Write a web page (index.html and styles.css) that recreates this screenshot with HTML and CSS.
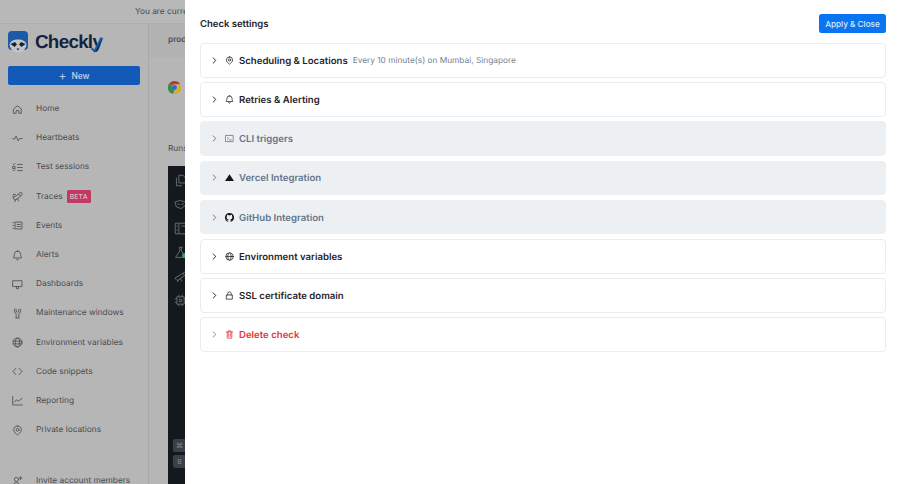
FILE: index.html
```html
<!DOCTYPE html>
<html lang="en">
<head>
<meta charset="utf-8">
<title>Check settings</title>
<link rel="stylesheet" href="styles.css">
</head>
<body>
<div class="app">
  <div class="banner">You are currently viewing</div>
  <div class="shell">
    <aside class="sidebar">
      <div class="logo">
        <svg class="logo-mark" viewBox="0 0 20 22" width="20" height="22">
          <rect x="0" y="0" width="20" height="19" rx="4" fill="#1a5ba8"/>
          <path d="M1.500 14c.5-4 4-5.500 8.500-5.500s8 1.500 8.500 5.500c-1 4.500-4 7.500-8.500 7.500s-7.500-3-8.500-7.500z" fill="#c4c4c4"/>
          <path d="M2.500 13l4.500-2 2 2.500-2.500 2.500zM17.500 13 13 11l-2 2.500 2.500 2.500z" fill="#17233c"/>
          <path d="M8.500 17.500h3l-1.500 2z" fill="#17233c"/>
        </svg>
        <span class="logo-text">Checkly<svg class="logo-check" viewBox="0 0 14 18" width="13" height="17"><path d="M1.500 13 5 16 12.500 1.500" /></svg></span>
      </div>
      <button class="new-btn"><span class="plus">+</span>New</button>
      <nav class="nav">
        <a class="nav-item"><svg class="ico" viewBox="0 0 16 16"><path d="M2.500 7 8 2.500 13.500 7v6.500h-3.500v-4H6v4H2.500z"/></svg>Home</a>
        <a class="nav-item"><svg class="ico" viewBox="0 0 16 16"><path d="M1 8.500h3l2-4 3 7 2-3.500h4"/></svg>Heartbeats</a>
        <a class="nav-item"><svg class="ico" viewBox="0 0 16 16"><path d="M8 3.500h7M8 8h7M8 12.500h7M1.500 3l1 1 2-2M1.500 6.500h3v3h-3zM1.500 12l1 1 2-2"/></svg>Test sessions</a>
        <a class="nav-item"><svg class="ico" viewBox="0 0 16 16"><path d="M2 9.500l8-5 2.500 3.500-8 5zM10 3.500l3-2 2 3.500-2.500 2M6 12.500l-2 3M8 11.500l2 3M2 5h3M1 7.500h2"/></svg>Traces<span class="badge">BETA</span></a>
        <a class="nav-item"><svg class="ico" viewBox="0 0 16 16"><path d="M5 3h9.500v10H5zM7.500 6.500h4.500M7.500 9.500h4.500M1.500 3.500h1M1.500 8h1M1.500 12.500h1"/></svg>Events</a>
        <a class="nav-item"><svg class="ico" viewBox="0 0 16 16"><path d="M8 1.500a4.500 4.500 0 0 1 4.500 4.500c0 3.500 1.500 5 1.500 5.500H2c0-.5 1.500-2 1.500-5.500A4.500 4.500 0 0 1 8 1.500zM6.500 13.500a1.600 1.600 0 0 0 3 0"/></svg>Alerts</a>
        <a class="nav-item"><svg class="ico" viewBox="0 0 16 16"><path d="M1.500 2.500h13v8.500h-13zM6.500 11v3h3v-3"/></svg>Dashboards</a>
        <a class="nav-item"><svg class="ico" viewBox="0 0 16 16"><path d="M4 1.500c-1.500 3 0 6 2 6.500v6.500M12 1.500c1.500 3 0 6-2 6.500v6.500M6 14.500h4M6 2v3l2 1 2-1V2"/></svg>Maintenance windows</a>
        <a class="nav-item"><svg class="ico" viewBox="0 0 16 16"><circle cx="8" cy="8" r="6.500"/><ellipse cx="8" cy="8" rx="3" ry="6.500"/><path d="M1.500 6h13M1.500 10h13"/></svg>Environment variables</a>
        <a class="nav-item"><svg class="ico" viewBox="0 0 16 16"><path d="M5.500 3.500 1.500 8l4 4.500M10.500 3.500l4 4.500-4 4.500"/></svg>Code snippets</a>
        <a class="nav-item"><svg class="ico" viewBox="0 0 16 16"><path d="M1 2v12.500h14M3.500 10.500l3-3.500 3 2 5-4"/></svg>Reporting</a>
        <a class="nav-item"><svg class="ico" viewBox="0 0 16 16"><path d="M8 1.500a5.500 5.500 0 0 1 5.500 5.500c0 3.500-3.500 6-5.500 7.500C6 13 2.500 10.500 2.500 7A5.500 5.500 0 0 1 8 1.500z"/><circle cx="8" cy="7" r="2"/></svg>Private locations</a>
      </nav>
      <a class="nav-item invite"><svg class="ico" viewBox="0 0 16 16"><circle cx="6.500" cy="5" r="3"/><path d="M1.500 14.500c0-3 2-5 5-5s5 2 5 5M12.500 1v4M10.500 3h4"/></svg>Invite account members</a>
    </aside>
    <main class="main">
      <div class="main-head"><span class="crumb">prod</span></div>
      <div class="check-row">
        <svg class="chrome" viewBox="0 0 16 16" width="13" height="13">
          <path d="M8 0a8 8 0 0 1 7 4H8a4 4 0 0 0-3.500 2L2 2.500A8 8 0 0 1 8 0z" fill="#b53a32"/>
          <path d="M2 2.500 4.500 6 8 12l-2 3.800A8 8 0 0 1 2 2.500z" fill="#3b8a4e"/>
          <path d="M15 4a8 8 0 0 1-9 11.800L11.500 10A4 4 0 0 0 11 4z" fill="#d6a92e"/>
          <circle cx="8" cy="8" r="3" fill="#2c6fb5"/>
        </svg>
      </div>
      <div class="runs-label">Runs</div>
      <div class="terminal">
        <div class="term-rail">
          <svg class="term-ico" viewBox="0 0 16 16"><path d="M6 1.500h5l3 3V11H6zM3 4.500v10h7"/></svg>
          <svg class="term-ico" viewBox="0 0 16 16"><path d="M1 5l6-2 8 2-1 4-5 4-6-2zM4 7l3 1M9 8l3-1"/></svg>
          <svg class="term-ico" viewBox="0 0 16 16"><path d="M1.500 1.500h13v13h-13zM6 1.500v13M9 5h5M3 5h1.500M3 9l2 2"/></svg>
          <svg class="term-ico" viewBox="0 0 16 16"><path d="M6 1.500h5M7 1.500V6l-5 8h12l-5-8V1.500"/></svg>
          <svg class="term-ico" viewBox="0 0 16 16"><path d="M1 10l10-6 2 3-9 6zM11 4l3-2 1 3-2 2M6 12l-2 3M8 11l2 3"/></svg>
          <svg class="term-ico" viewBox="0 0 16 16"><path d="M3.500 3.500h9v9h-9zM6.500 6.500h3v3h-3zM6 1v2.500M10 1v2.500M6 12.500V15M10 12.500V15M1 6h2.500M1 10h2.500M12.500 6H15M12.500 10H15"/></svg>
          <span class="status-dot"></span>
          <div class="keys"><span class="key">⌘</span><span class="key">B</span></div>
        </div>
      </div>
    </main>
  </div>
</div>

<section class="drawer">
  <header class="drawer-head">
    <h1 class="drawer-title">Check settings</h1>
    <button class="apply-btn">Apply &amp; Close</button>
  </header>
  <div class="sections">
    <div class="section">
      <svg class="chev" viewBox="0 0 8 8"><path d="M2.500 1 5.500 4l-3 3"/></svg>
      <svg class="sec-ico" viewBox="0 0 16 16"><path d="M8 1.500a5.500 5.500 0 0 1 5.500 5.500c0 3.500-3.500 6-5.500 7.500C6 13 2.500 10.500 2.500 7A5.500 5.500 0 0 1 8 1.500z"/><circle cx="8" cy="7" r="2"/></svg>
      <span class="sec-title">Scheduling &amp; Locations</span>
      <span class="sec-note">Every 10 minute(s) on Mumbai, Singapore</span>
    </div>
    <div class="section">
      <svg class="chev" viewBox="0 0 8 8"><path d="M2.500 1 5.500 4l-3 3"/></svg>
      <svg class="sec-ico" viewBox="0 0 16 16"><path d="M8 1.500a4.500 4.500 0 0 1 4.500 4.500c0 3.500 1.500 5 1.500 5.500H2c0-.5 1.500-2 1.500-5.500A4.500 4.500 0 0 1 8 1.500zM6.500 13.500a1.600 1.600 0 0 0 3 0"/></svg>
      <span class="sec-title">Retries &amp; Alerting</span>
    </div>
    <div class="section section-off">
      <svg class="chev" viewBox="0 0 8 8"><path d="M2.500 1 5.500 4l-3 3"/></svg>
      <svg class="sec-ico" viewBox="0 0 16 16"><path d="M1.500 2.500h13v11h-13zM4.500 6l2 2-2 2M8 10.500h3"/></svg>
      <span class="sec-title">CLI triggers</span>
    </div>
    <div class="section section-off">
      <svg class="chev" viewBox="0 0 8 8"><path d="M2.500 1 5.500 4l-3 3"/></svg>
      <svg class="sec-ico sec-solid" viewBox="0 0 16 16"><path d="M8 2 16 14H0z"/></svg>
      <span class="sec-title">Vercel Integration</span>
    </div>
    <div class="section section-off">
      <svg class="chev" viewBox="0 0 8 8"><path d="M2.500 1 5.500 4l-3 3"/></svg>
      <svg class="sec-ico sec-solid" viewBox="0 0 16 16"><path fill-rule="evenodd" d="M8 0a8 8 0 0 0-2.500 15.600c.4.100.5-.2.500-.4v-1.400c-2.200.5-2.700-1-2.700-1-.4-.9-.9-1.200-.9-1.200-.7-.5.100-.5.100-.5.800.1 1.200.8 1.200.8.700 1.200 1.900.9 2.300.7.100-.5.300-.9.500-1.100-1.800-.2-3.600-.9-3.600-4 0-.9.300-1.600.8-2.100-.1-.2-.4-1 .1-2.100 0 0 .7-.2 2.200.8a7.600 7.600 0 0 1 4 0c1.500-1 2.200-.8 2.200-.8.500 1.100.2 1.900.1 2.100.5.600.8 1.300.8 2.100 0 3.100-1.900 3.800-3.700 4 .3.300.6.800.6 1.500v2.200c0 .2.100.5.600.4A8 8 0 0 0 8 0z"/></svg>
      <span class="sec-title">GitHub Integration</span>
    </div>
    <div class="section">
      <svg class="chev" viewBox="0 0 8 8"><path d="M2.500 1 5.500 4l-3 3"/></svg>
      <svg class="sec-ico" viewBox="0 0 16 16"><circle cx="8" cy="8" r="6.500"/><ellipse cx="8" cy="8" rx="3" ry="6.500"/><path d="M1.500 8h13"/></svg>
      <span class="sec-title">Environment variables</span>
    </div>
    <div class="section">
      <svg class="chev" viewBox="0 0 8 8"><path d="M2.500 1 5.500 4l-3 3"/></svg>
      <svg class="sec-ico" viewBox="0 0 16 16"><path d="M3 7h10v7.500H3zM5 7V4.500a3 3 0 0 1 6 0V7"/></svg>
      <span class="sec-title">SSL certificate domain</span>
    </div>
    <div class="section section-danger">
      <svg class="chev" viewBox="0 0 8 8"><path d="M2.500 1 5.500 4l-3 3"/></svg>
      <svg class="sec-ico" viewBox="0 0 16 16"><path d="M2.500 3.500h11M6 3.500V1.500h4v2M4 3.500v11h8v-11M6.500 6.500v5M9.500 6.500v5"/></svg>
      <span class="sec-title">Delete check</span>
    </div>
  </div>
</section>
</body>
</html>
```
FILE: styles.css
```css
* { box-sizing: border-box; }
html, body { margin: 0; height: 100%; overflow: hidden; }
body {
  font-family: Inter, "Liberation Sans", sans-serif;
  text-rendering: geometricPrecision;
  background: #b6b6b6;
  color: #3c4147;
  width: 900px;
  height: 484px;
  position: relative;
}
.app { display: flex; flex-direction: column; height: 484px; }
.banner {
  height: 24px;
  flex: none;
  font-size: 8.300px;
  line-height: 25px;
  padding-left: 135px;
  white-space: nowrap;
  color: #44484d;
  background: #b8b8b8;
  border-bottom: 1px solid #adadad;
}
.shell { display: flex; flex: 1; min-height: 0; }
.sidebar {
  width: 149px;
  flex: none;
  border-right: 1px solid #a8a8a8;
  display: flex;
  flex-direction: column;
  padding: 7px 8px 0;
  background: #b6b6b6;
}
.logo { display: flex; align-items: center; gap: 7px; height: 21px; flex: none; }
.logo-mark { flex: none; }
.logo-text {
  font-family: "Liberation Sans", Inter, sans-serif;
  font-weight: 700;
  font-size: 18.800px;
  letter-spacing: -.7px;
  color: #16233f;
  position: relative;
}
.logo-check {
  position: absolute;
  right: -1px;
  top: 5px;
  fill: none;
  stroke: #1a5ba8;
  stroke-width: 2.200;
}
.new-btn {
  margin-top: 14px;
  height: 19px;
  flex: none;
  width: 132px;
  border: 0;
  border-radius: 2px;
  background: #1259b8;
  color: #b5c9e6;
  font: 600 8.300px Inter, sans-serif;
  display: flex;
  align-items: center;
  justify-content: center;
  gap: 5px;
}
.plus { font-size: 12px; font-weight: 400; line-height: 1; }
.nav { display: flex; flex-direction: column; margin-top: 8.500px; }
.nav-item {
  height: 29.200px;
  flex: none;
  display: flex;
  align-items: center;
  font-size: 8.300px;
  color: #474b50;
  white-space: nowrap;
  padding: 2px 0 0 4px;
}
.ico {
  width: 11px;
  height: 11px;
  flex: none;
  margin-right: 13px;
  fill: none;
  stroke: #484c52;
  stroke-width: 1.200;
  stroke-linecap: round;
  stroke-linejoin: round;
}
.badge {
  margin-left: 4px;
  background: #c03a62;
  color: #dcc0ca;
  font-size: 6.800px;
  font-weight: 500;
  height: 13px;
  line-height: 13px;
  padding: 0 3px;
  border-radius: 1.500px;
  letter-spacing: .2px;
}
.invite { margin-top: 22px; }
.main { flex: 1; min-width: 0; display: flex; flex-direction: column; }
.main-head {
  height: 34px;
  flex: none;
  background: #b2b2b2;
  padding-left: 19px;
  font-size: 8.300px;
  font-weight: 600;
  line-height: 33px;
  color: #4b4f55;
  white-space: nowrap;
}
.check-row { height: 76px; flex: none; padding: 23px 0 0 19px; }
.chrome { display: block; }
.runs-label {
  flex: none;
  height: 32px;
  padding: 8px 0 0 19px;
  font-size: 8.300px;
  line-height: 14px;
  color: #474b50;
  white-space: nowrap;
}
.terminal { flex: 1; margin-left: 19px; background: #15191e; min-height: 0; }
.term-rail {
  display: flex;
  flex-direction: column;
  align-items: flex-start;
  gap: 11px;
  padding: 8px 0 0 6px;
  height: 100%;
  position: relative;
}
.term-ico {
  width: 13px;
  height: 13px;
  flex: none;
  fill: none;
  stroke: #6f7377;
  stroke-width: 1.100;
  stroke-linejoin: round;
}
.status-dot {
  position: absolute;
  left: 14px;
  top: 87px;
  width: 5px;
  height: 5px;
  border-radius: 50%;
  background: #3f9a5a;
}
.keys {
  position: absolute;
  left: 5px;
  top: 273px;
  display: flex;
  flex-direction: column;
  gap: 3px;
}
.key {
  width: 13px;
  height: 13px;
  border-radius: 2px;
  background: #394049;
  color: #80858b;
  font-size: 7px;
  line-height: 13px;
  text-align: center;
}
.drawer {
  position: absolute;
  left: 185px;
  top: 0;
  right: 0;
  bottom: 0;
  background: #fff;
  padding: 14px 14px 0 15px;
}
.drawer-head {
  display: flex;
  align-items: center;
  justify-content: space-between;
  height: 19px;
  margin-bottom: 10px;
}
.drawer-title {
  margin: 2px 0 0;
  font-size: 9.500px;
  font-weight: 600;
  color: #1d2127;
}
.apply-btn {
  width: 67px;
  height: 19px;
  border: 0;
  border-radius: 2.500px;
  background: #0a75f0;
  color: #d8e9fd;
  font: 500 8.200px Inter, sans-serif;
  padding: 0;
}
.sections { display: flex; flex-direction: column; gap: 4.500px; }
.section {
  height: 34.700px;
  display: flex;
  align-items: center;
  border: 1px solid #e9edf2;
  border-radius: 4px;
  background: #fff;
  padding: 0 0 0 10px;
  color: #1f242b;
}
.chev {
  width: 7px;
  height: 7px;
  flex: none;
  margin-right: 7px;
  fill: none;
  stroke: currentColor;
  stroke-width: 1.100;
  stroke-linecap: round;
  stroke-linejoin: round;
}
.sec-ico {
  width: 9px;
  height: 9px;
  flex: none;
  margin-right: 5px;
  fill: none;
  stroke: #24292f;
  stroke-width: 1.400;
  stroke-linecap: round;
  stroke-linejoin: round;
}
.sec-solid { fill: #14171a; stroke: none; }
.sec-title { font-size: 9.600px; font-weight: 600; white-space: nowrap; margin-top: 2px; }
.sec-note { font-size: 8.300px; color: #76808c; margin: 2px 0 0 5px; white-space: nowrap; }
.section-off { background: #edf0f3; border-color: #edf0f3; color: #64748b; }
.section-off .sec-ico:not(.sec-solid) { stroke: #64748b; }
.section-danger { color: #e5343f; }
.section-danger .sec-ico { stroke: #e5343f; }
.section-danger .chev { color: #e5586a; }
```
